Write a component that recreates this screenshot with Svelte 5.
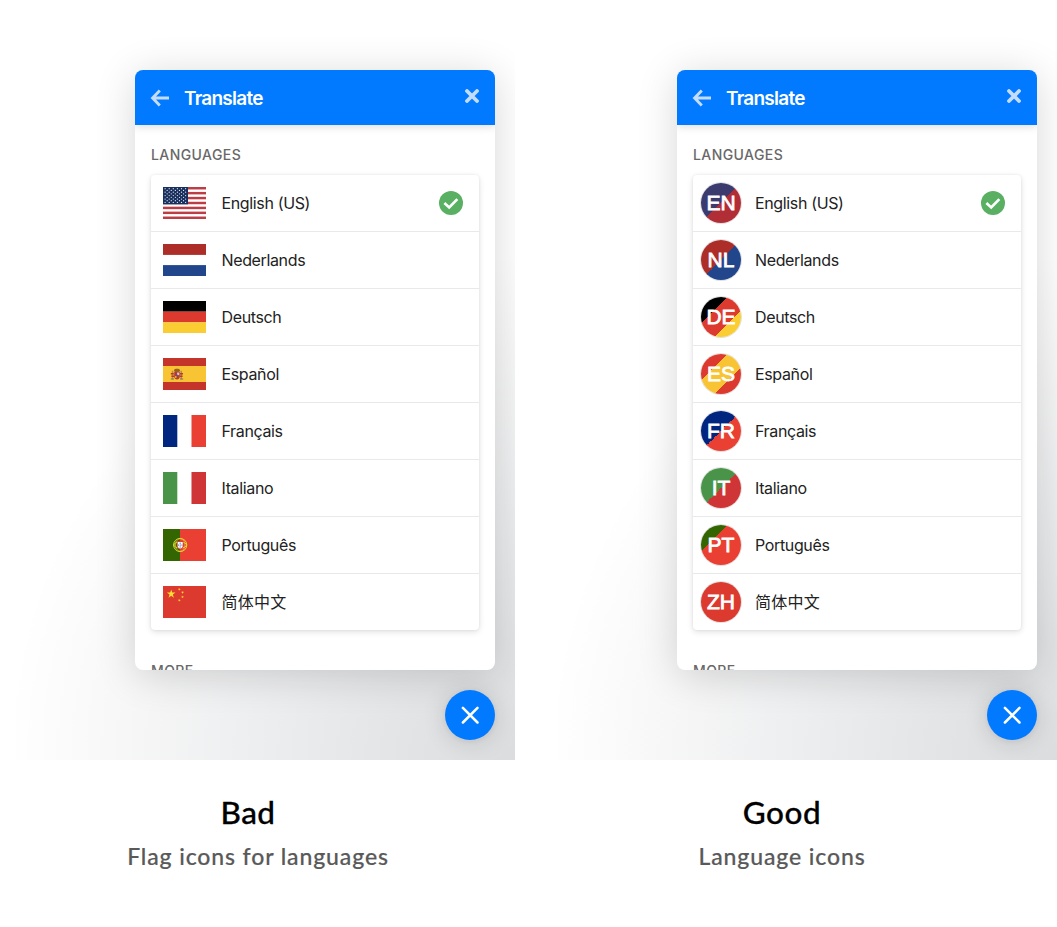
<script>
  const panels = [
    { kind: 'flags', title: 'Bad', note: 'Flag icons for languages' },
    { kind: 'codes', title: 'Good', note: 'Language icons' }
  ];

  const languages = [
    { code: 'EN', name: 'English (US)', fill: 'linear-gradient(135deg, #3c3b6e 50%, #b22e36 50%)' },
    { code: 'NL', name: 'Nederlands', fill: 'linear-gradient(135deg, #ad2d28 50%, #21468b 50%)' },
    { code: 'DE', name: 'Deutsch', fill: 'linear-gradient(135deg, #000 33.5%, #dd3a2f 33.5% 66.5%, #facd33 66.5%)' },
    { code: 'ES', name: 'Español', fill: 'linear-gradient(135deg, #dd3a2f 33.5%, #f8c433 33.5% 66.5%, #dd3a2f 66.5%)' },
    { code: 'FR', name: 'Français', fill: 'linear-gradient(135deg, #01267f 50%, #e94033 50%)' },
    { code: 'IT', name: 'Italiano', fill: 'linear-gradient(135deg, #4a944a 50%, #cf3537 50%)' },
    { code: 'PT', name: 'Português', fill: 'linear-gradient(135deg, #336600 33.5%, #e94033 33.5%)' },
    { code: 'ZH', name: '简体中文', fill: '#dd3a2f' }
  ];

  const stripes = [0, 1, 2, 3, 4, 5, 6];
  const stars = [];
  for (let r = 0; r < 9; r++) {
    const n = r % 2 ? 5 : 6;
    for (let c = 0; c < n; c++) {
      stars.push([2.1 + c * 4.1 + (r % 2 ? 2.05 : 0), 1.7 + r * 1.72]);
    }
  }
  const star = '0,-1 .225,-.309 .951,-.309 .363,.118 .588,.809 0,.382 -.588,.809 -.363,.118 -.951,-.309 -.225,-.309';
</script>

<main>
  <div class="stages">
    {#each panels as panel}
      <section class="stage">
        <div class="messenger">
          <header>
            <svg class="back" width="20" height="18" viewBox="0 0 20 18">
              <path d="M9.8 1.6 2.6 9l7.2 7.4M2.8 9H19" />
            </svg>
            <h1>Translate</h1>
            <svg class="dismiss" width="14" height="14" viewBox="0 0 14 14">
              <path d="m2 2 10 10M12 2 2 12" />
            </svg>
          </header>
          <h2>LANGUAGES</h2>
          <ul>
            {#each languages as lang}
              <li class={panel.kind}>
                {#if panel.kind === 'codes'}
                  <span class="badge" style:background={lang.fill}>{lang.code}</span>
                {:else}
                  <svg class="flag" width="43" height="32" viewBox="0 0 43 32">
                    {#if lang.code === 'EN'}
                      <rect width="43" height="32" fill="#fff" />
                      {#each stripes as s}
                        <rect y={s * 4.923} width="43" height="2.46" fill="#bd3d44" />
                      {/each}
                      <rect width="25" height="17.3" fill="#192f5d" />
                      {#each stars as [x, y]}
                        <circle cx={x} cy={y} r=".62" fill="#e4e8f0" />
                      {/each}
                    {:else if lang.code === 'NL'}
                      <rect width="43" height="10.9" fill="#ad2d28" />
                      <rect y="21.1" width="43" height="10.9" fill="#21468b" />
                    {:else if lang.code === 'DE'}
                      <rect width="43" height="10.7" fill="#000" />
                      <rect y="10.6" width="43" height="10.8" fill="#dd3a2f" />
                      <rect y="21.3" width="43" height="10.7" fill="#facd33" />
                    {:else if lang.code === 'ES'}
                      <rect width="43" height="32" fill="#c5342a" />
                      <rect y="8" width="43" height="16" fill="#f8c433" />
                      <path d="M8.8 12.8h1.6v8.4H8.8zM17.4 12.8H19v8.4h-1.6z" fill="#b98a4e" />
                      <path d="M7.8 15h3v1.5h-3zM8.4 17.6h2.8v1.3H8.4zM17 15h3v1.5h-3zM16.8 17.6h2.8v1.3h-2.8z" fill="#b8382d" />
                      <path d="M11.2 14h5.6v4.6c0 4-5.6 4-5.6 0z" fill="#b23b35" />
                      <path d="M11 12.2c.5-1.8 5.5-1.8 6 0l-.7 1.8h-4.6z" fill="#99601f" />
                      <path d="M14.1 14.5h2.1v2.6h-2.1z" fill="#e0c5cc" />
                      <circle cx="14" cy="17.5" r=".9" fill="#4e5aa0" />
                      <path d="M12 17.9h1.5v2.2H12z" fill="#e6a52d" />
                      <path d="M7.8 21h3.1M17.1 21h3.1" stroke="#77796a" stroke-width="1" />
                    {:else if lang.code === 'FR'}
                      <rect width="14.3" height="32" fill="#01267f" />
                      <rect x="28.5" width="14.5" height="32" fill="#e94033" />
                    {:else if lang.code === 'IT'}
                      <rect width="14.3" height="32" fill="#4a944a" />
                      <rect x="28.5" width="14.5" height="32" fill="#cf3537" />
                    {:else if lang.code === 'PT'}
                      <rect width="43" height="32" fill="#e94033" />
                      <rect width="17" height="32" fill="#336600" />
                      <g fill="none" stroke="#e4d832" stroke-width="1">
                        <circle cx="17.2" cy="16" r="6.6" />
                        <ellipse cx="17.2" cy="16" rx="6.4" ry="3" />
                        <ellipse cx="17.2" cy="16" rx="4.8" ry="6.2" stroke-width=".6" />
                      </g>
                      <path d="M13.9 11.9h6.6v5c0 4.4-6.6 4.4-6.6 0z" fill="#e03c36" />
                      <path d="M14.7 13h5v4c0 3.2-5 3.2-5 0z" fill="#fff" />
                      <g fill="#6d7bb5">
                        <rect x="16.6" y="13.6" width="1.2" height="1.2" />
                        <rect x="16.6" y="15.5" width="1.2" height="1.2" />
                        <rect x="16.6" y="17.4" width="1.2" height="1.2" />
                        <rect x="15" y="15.5" width="1" height="1.2" />
                        <rect x="18.4" y="15.5" width="1" height="1.2" />
                      </g>
                    {:else}
                      <rect width="43" height="32" fill="#dd3a2f" />
                      <g fill="#ffde33">
                        <polygon points={star} transform="translate(8.2 8) scale(4.5)" />
                        <polygon points={star} transform="translate(16.3 3.3) rotate(20) scale(1.5)" />
                        <polygon points={star} transform="translate(19.5 6.4) rotate(40) scale(1.5)" />
                        <polygon points={star} transform="translate(19.5 11) scale(1.5)" />
                        <polygon points={star} transform="translate(16.3 14.3) rotate(20) scale(1.5)" />
                      </g>
                    {/if}
                  </svg>
                {/if}
                <span class="name" class:han={lang.code === 'ZH'}>{lang.name}</span>
                {#if lang.code === 'EN'}
                  <svg class="check" width="24" height="24" viewBox="0 0 24 24">
                    <circle cx="12" cy="12" r="12" fill="#59b063" />
                    <path d="m6.4 12.9 3.8 3.5 7.2-7.3" fill="none" stroke="#fff" stroke-width="2.7" stroke-linecap="square" />
                  </svg>
                {/if}
              </li>
            {/each}
          </ul>
          <h2 class="more">MORE</h2>
        </div>
        <div class="launcher">
          <svg width="18" height="18" viewBox="0 0 18 18">
            <path d="m1.9 1.9 14.6 14.6M16.5 1.9 1.9 16.5" />
          </svg>
        </div>
      </section>
    {/each}
  </div>
  <div class="captions">
    {#each panels as panel}
      <div class="caption {panel.kind}">
        <h3>{panel.title}</h3>
        <p>{panel.note}</p>
      </div>
    {/each}
  </div>
</main>

<style>
  :global(body) { margin: 0; background: #fff; }
  main {
    width: 1057px;
    height: 927px;
    overflow: hidden;
    background: #fff;
    font-family: Inter, "Noto Sans CJK SC", sans-serif;
  }
  h1, h2, h3, p, ul { margin: 0; padding: 0; }
  .stages { display: grid; grid-template-columns: 515px 515px; gap: 27px; }
  .stage {
    box-sizing: border-box;
    height: 760px;
    padding: 70px 20px 20px 0;
    display: flex;
    flex-direction: column;
    align-items: flex-end;
    gap: 20px;
    overflow: hidden;
    background: radial-gradient(ellipse at bottom right, rgba(29, 39, 54, .16) 0, rgba(29, 39, 54, 0) 72%) right bottom / 500px 500px no-repeat;
  }
  .messenger {
    width: 360px;
    height: 600px;
    flex: none;
    border-radius: 8px;
    overflow: hidden;
    background: #fff;
    box-shadow: 0 5px 40px rgba(0, 0, 0, .16);
  }
  header {
    box-sizing: border-box;
    height: 55px;
    padding: 0 16px 0 15px;
    display: flex;
    align-items: center;
    background: #027aff;
    box-shadow: 0 2px 8px rgba(0, 0, 0, .13);
  }
  header svg { fill: none; stroke: #c3dcff; }
  .back { stroke-width: 2.9; }
  .dismiss { stroke-width: 3.8; stroke-linecap: round; margin: -3px 0 0 auto; }
  h1 { margin: 2px 0 0 14px; color: #fff; font-size: 19px; font-weight: 600; letter-spacing: -.75px; }
  h2 {
    margin: 20px 16px 10px;
    color: #686868;
    font-size: 14px;
    line-height: 20px;
    font-weight: 500;
    letter-spacing: .42px;
  }
  .more { margin-top: 31px; }
  ul {
    margin: 0 16px;
    list-style: none;
    border-radius: 4px;
    background: #fff;
    box-shadow: 0 2px 6px rgba(0, 0, 0, .12), 0 0 3px rgba(0, 0, 0, .07);
  }
  li {
    height: 56px;
    padding: 0 16px 0 12px;
    display: flex;
    align-items: center;
    gap: 15.5px;
    border-bottom: 1px solid #e8e9eb;
  }
  li:last-child { border-bottom: 0; }
  li.codes { padding-left: 8px; gap: 14px; }
  .flag { flex: none; }
  .badge {
    width: 40px;
    height: 40px;
    flex: none;
    border-radius: 50%;
    box-shadow: 0 0 0 1px rgba(0, 0, 0, .12);
    color: #fff;
    font: 400 21px/40px "Liberation Sans", Arial, sans-serif;
    -webkit-text-stroke: .8px #fff;
    text-align: center;
  }
  .name { color: #222; font-size: 16px; line-height: 24px; letter-spacing: -.36px; }
  .name.han { letter-spacing: .25px; }
  .check { margin-left: auto; }
  .launcher {
    width: 50px;
    height: 50px;
    flex: none;
    display: grid;
    place-items: center;
    border-radius: 50%;
    background: #027aff;
    box-shadow: 0 1px 6px rgba(0, 0, 0, .06), 0 2px 24px rgba(0, 0, 0, .14);
  }
  .launcher path { stroke: #fff; stroke-width: 2.5; stroke-linecap: round; }
  .captions { display: grid; grid-template-columns: 516px 532px; padding-top: 32px; }
  .caption { text-align: center; font-family: Lato, sans-serif; font-weight: 500; }
  h3 { color: #000; font-size: 31.5px; line-height: 40px; font-weight: inherit; letter-spacing: .5px; -webkit-text-stroke: .3px #000; }
  .flags h3 { margin-right: 20px; }
  p { margin-top: 7px; color: #595959; font-size: 23px; line-height: 34px; letter-spacing: .88px; -webkit-text-stroke: .2px #595959; }
</style>
